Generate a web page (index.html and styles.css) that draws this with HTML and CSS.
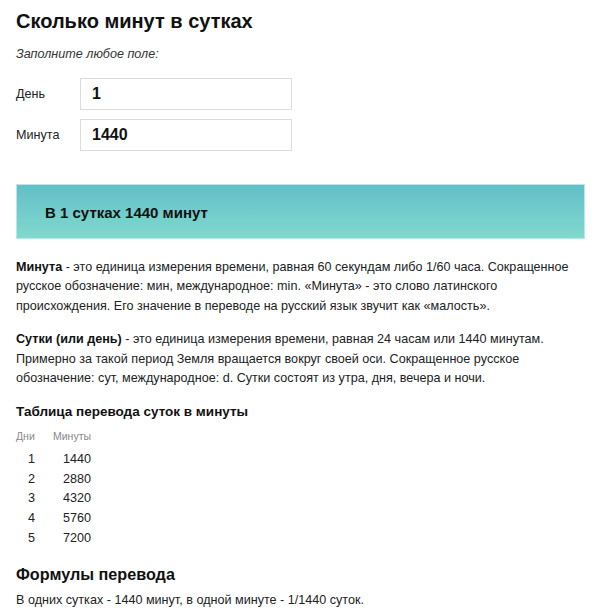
FILE: index.html
```html
<!DOCTYPE html>
<html lang="ru">
<head>
<meta charset="utf-8">
<title>Сколько минут в сутках</title>
<link rel="stylesheet" href="styles.css">
</head>
<body>
<div class="page">
  <h1 class="title">Сколько минут в сутках</h1>
  <p class="hint">Заполните любое поле:</p>
  <div class="form">
    <div class="row">
      <label class="label">День</label>
      <div class="field">1</div>
    </div>
    <div class="row">
      <label class="label">Минута</label>
      <div class="field">1440</div>
    </div>
  </div>
  <div class="result">В 1 сутках 1440 минут</div>
  <p class="text"><b>Минута</b> - это единица измерения времени, равная 60 секундам либо 1/60 часа. Сокращенное русское обозначение: мин, международное: min. «Минута» - это слово латинского происхождения. Его значение в переводе на русский язык звучит как «малость».</p>
  <p class="text text2"><b>Сутки (или день)</b> - это единица измерения времени, равная 24 часам или 1440 минутам. Примерно за такой период Земля вращается вокруг своей оси. Сокращенное русское обозначение: сут, международное: d. Сутки состоят из утра, дня, вечера и ночи.</p>
  <h4 class="table-title">Таблица перевода суток в минуты</h4>
  <table class="conv">
    <thead>
      <tr><th class="c1">Дни</th><th class="c2">Минуты</th></tr>
    </thead>
    <tbody>
      <tr><td class="c1">1</td><td class="c2">1440</td></tr>
      <tr><td class="c1">2</td><td class="c2">2880</td></tr>
      <tr><td class="c1">3</td><td class="c2">4320</td></tr>
      <tr><td class="c1">4</td><td class="c2">5760</td></tr>
      <tr><td class="c1">5</td><td class="c2">7200</td></tr>
    </tbody>
  </table>
  <h3 class="formulas">Формулы перевода</h3>
  <p class="last">В одних сутках - 1440 минут, в одной минуте - 1/1440 суток.</p>
</div>
</body>
</html>
```
FILE: styles.css
```css
html, body {
  margin: 0;
  padding: 0;
  background: #fff;
}
body {
  font-family: "Liberation Sans", Arial, sans-serif;
  color: #222;
}
.page {
  width: 569px;
  padding: 0 15px 0 16px;
}
.title {
  margin: 9px 0 0;
  font-size: 20px;
  line-height: 24px;
  font-weight: bold;
  color: #111;
}
.hint {
  margin: 12px 0 0;
  font-size: 12.6px;
  line-height: 18px;
  font-style: italic;
  color: #333;
}
.form {
  margin-top: 15px;
  display: flex;
  flex-direction: column;
  gap: 9px;
}
.row {
  display: flex;
  align-items: center;
}
.label {
  width: 64px;
  font-size: 12.6px;
  color: #222;
}
.field {
  box-sizing: border-box;
  width: 212px;
  height: 32px;
  border: 1px solid #dcdcdc;
  padding: 0 11px;
  font-size: 16px;
  font-weight: bold;
  line-height: 30px;
  color: #111;
}
.result {
  margin-top: 33px;
  box-sizing: border-box;
  height: 55px;
  padding: 18px 28px 17px;
  font-size: 15px;
  line-height: 20px;
  font-weight: bold;
  color: #111;
  background: linear-gradient(to bottom, #63bfc8, #80d9cd);
  border: 1px solid #b9e6e6;
}
.text {
  margin: 18.5px 0 0;
  font-size: 12.6px;
  line-height: 19.6px;
  color: #222;
}
.text b {
  color: #111;
}
.text2 {
  margin-top: 14px;
}
.table-title {
  margin: 13px 0 0;
  font-size: 13.5px;
  line-height: 20px;
  font-weight: bold;
  color: #111;
}
.conv {
  margin-top: 7px;
  border-collapse: collapse;
  border-spacing: 0;
}
.conv th {
  font-size: 10.5px;
  line-height: 14px;
  font-weight: normal;
  color: #888;
  padding: 0 0 7px;
  text-align: left;
}
.conv td {
  font-size: 12.6px;
  line-height: 19.7px;
  padding: 0;
  color: #222;
}
.conv th.c1 { width: 37px; }
.conv td.c1 { padding-left: 12px; }
.conv td.c2 { padding-left: 10px; }
.formulas {
  margin: 14px 0 0;
  font-size: 16.2px;
  line-height: 22px;
  font-weight: bold;
  color: #111;
}
.last {
  margin: 5px 0 0;
  font-size: 12.6px;
  line-height: 20px;
  color: #222;
}
```
